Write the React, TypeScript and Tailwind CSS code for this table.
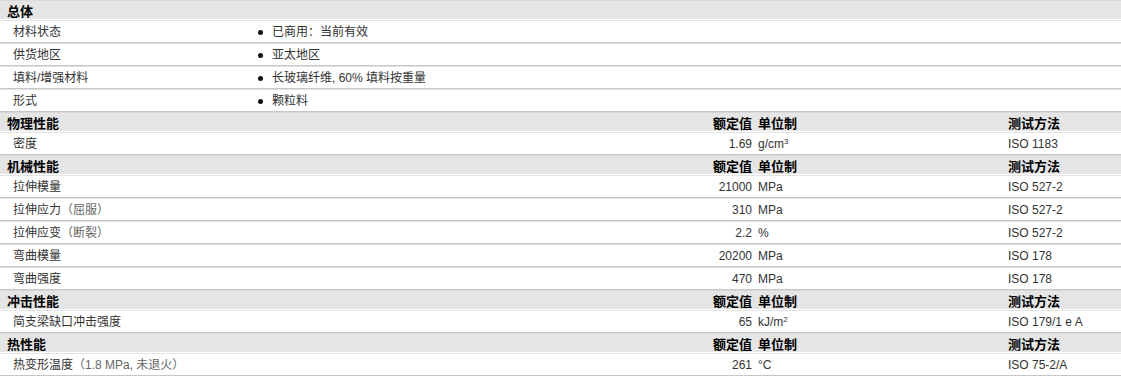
import React from 'react';

type DataRow = { label: string; note?: string; value: string; unit: React.ReactNode; method: string };
type Section = { title: string; rows: DataRow[] };

const general = [
  { label: '材料状态', value: '已商用：当前有效' },
  { label: '供货地区', value: '亚太地区' },
  { label: '填料/增强材料', value: '长玻璃纤维, 60% 填料按重量' },
  { label: '形式', value: '颗粒料' },
];

const sections: Section[] = [
  {
    title: '物理性能',
    rows: [{ label: '密度', value: '1.69', unit: <>g/cm<sup className="text-[8px]">3</sup></>, method: 'ISO 1183' }],
  },
  {
    title: '机械性能',
    rows: [
      { label: '拉伸模量', value: '21000', unit: 'MPa', method: 'ISO 527-2' },
      { label: '拉伸应力', note: '（屈服）', value: '310', unit: 'MPa', method: 'ISO 527-2' },
      { label: '拉伸应变', note: '（断裂）', value: '2.2', unit: '%', method: 'ISO 527-2' },
      { label: '弯曲模量', value: '20200', unit: 'MPa', method: 'ISO 178' },
      { label: '弯曲强度', value: '470', unit: 'MPa', method: 'ISO 178' },
    ],
  },
  {
    title: '冲击性能',
    rows: [{ label: '简支梁缺口冲击强度', value: '65', unit: <>kJ/m<sup className="text-[8px]">2</sup></>, method: 'ISO 179/1 e A' }],
  },
  {
    title: '热性能',
    rows: [{ label: '热变形温度', note: '（1.8 MPa, 未退火）', value: '261', unit: '°C', method: 'ISO 75-2/A' }],
  },
];

const font = { fontFamily: '"Liberation Sans", "Noto Sans CJK SC", sans-serif' };

function HeaderRow({ title, cols = true }: { title: string; cols?: boolean }) {
  return (
    <div className="grid grid-cols-[255px_497px_252px_1fr] h-[20px] pt-[2px] bg-[#e5e5e5] border-t border-t-[#d9d9d9] border-b border-b-white text-[13px] font-bold text-black leading-[17px]">
      <div className="pl-[7px]">{title}</div>
      <div className="text-right">{cols ? '额定值' : ''}</div>
      <div className="pl-[6px]">{cols ? '单位制' : ''}</div>
      <div className="pl-[4px]">{cols ? '测试方法' : ''}</div>
    </div>
  );
}

export default function App() {
  return (
    <div className="w-[1121px] bg-white text-[12px] text-[#333]" style={font}>
      <HeaderRow title="总体" cols={false} />
      {general.map((g) => (
        <div key={g.label} className="grid grid-cols-[255px_1fr] h-[23px] pt-[2px] border-t border-t-[#e3e3e3] border-b border-b-[#c6c6c6] leading-[19px]">
          <div className="pl-[13px]">{g.label}</div>
          <div className="flex items-center pl-[3px]">
            <span className="w-[5px] h-[5px] rounded-full bg-[#111] mr-[9px]" />
            <span>{g.value}</span>
          </div>
        </div>
      ))}
      {sections.map((s) => (
        <div key={s.title}>
          <HeaderRow title={s.title} />
          {s.rows.map((r) => (
            <div key={r.label} className="grid grid-cols-[255px_497px_252px_1fr] h-[23px] pt-[2px] border-t border-t-[#e3e3e3] border-b border-b-[#c6c6c6] leading-[19px]">
              <div className="pl-[13px] whitespace-nowrap">
                {r.label}
                {r.note && <span className="text-[#666]">{r.note}</span>}
              </div>
              <div className="text-right">{r.value}</div>
              <div className="pl-[6px]">{r.unit}</div>
              <div className="pl-[4px]">{r.method}</div>
            </div>
          ))}
        </div>
      ))}
    </div>
  );
}
